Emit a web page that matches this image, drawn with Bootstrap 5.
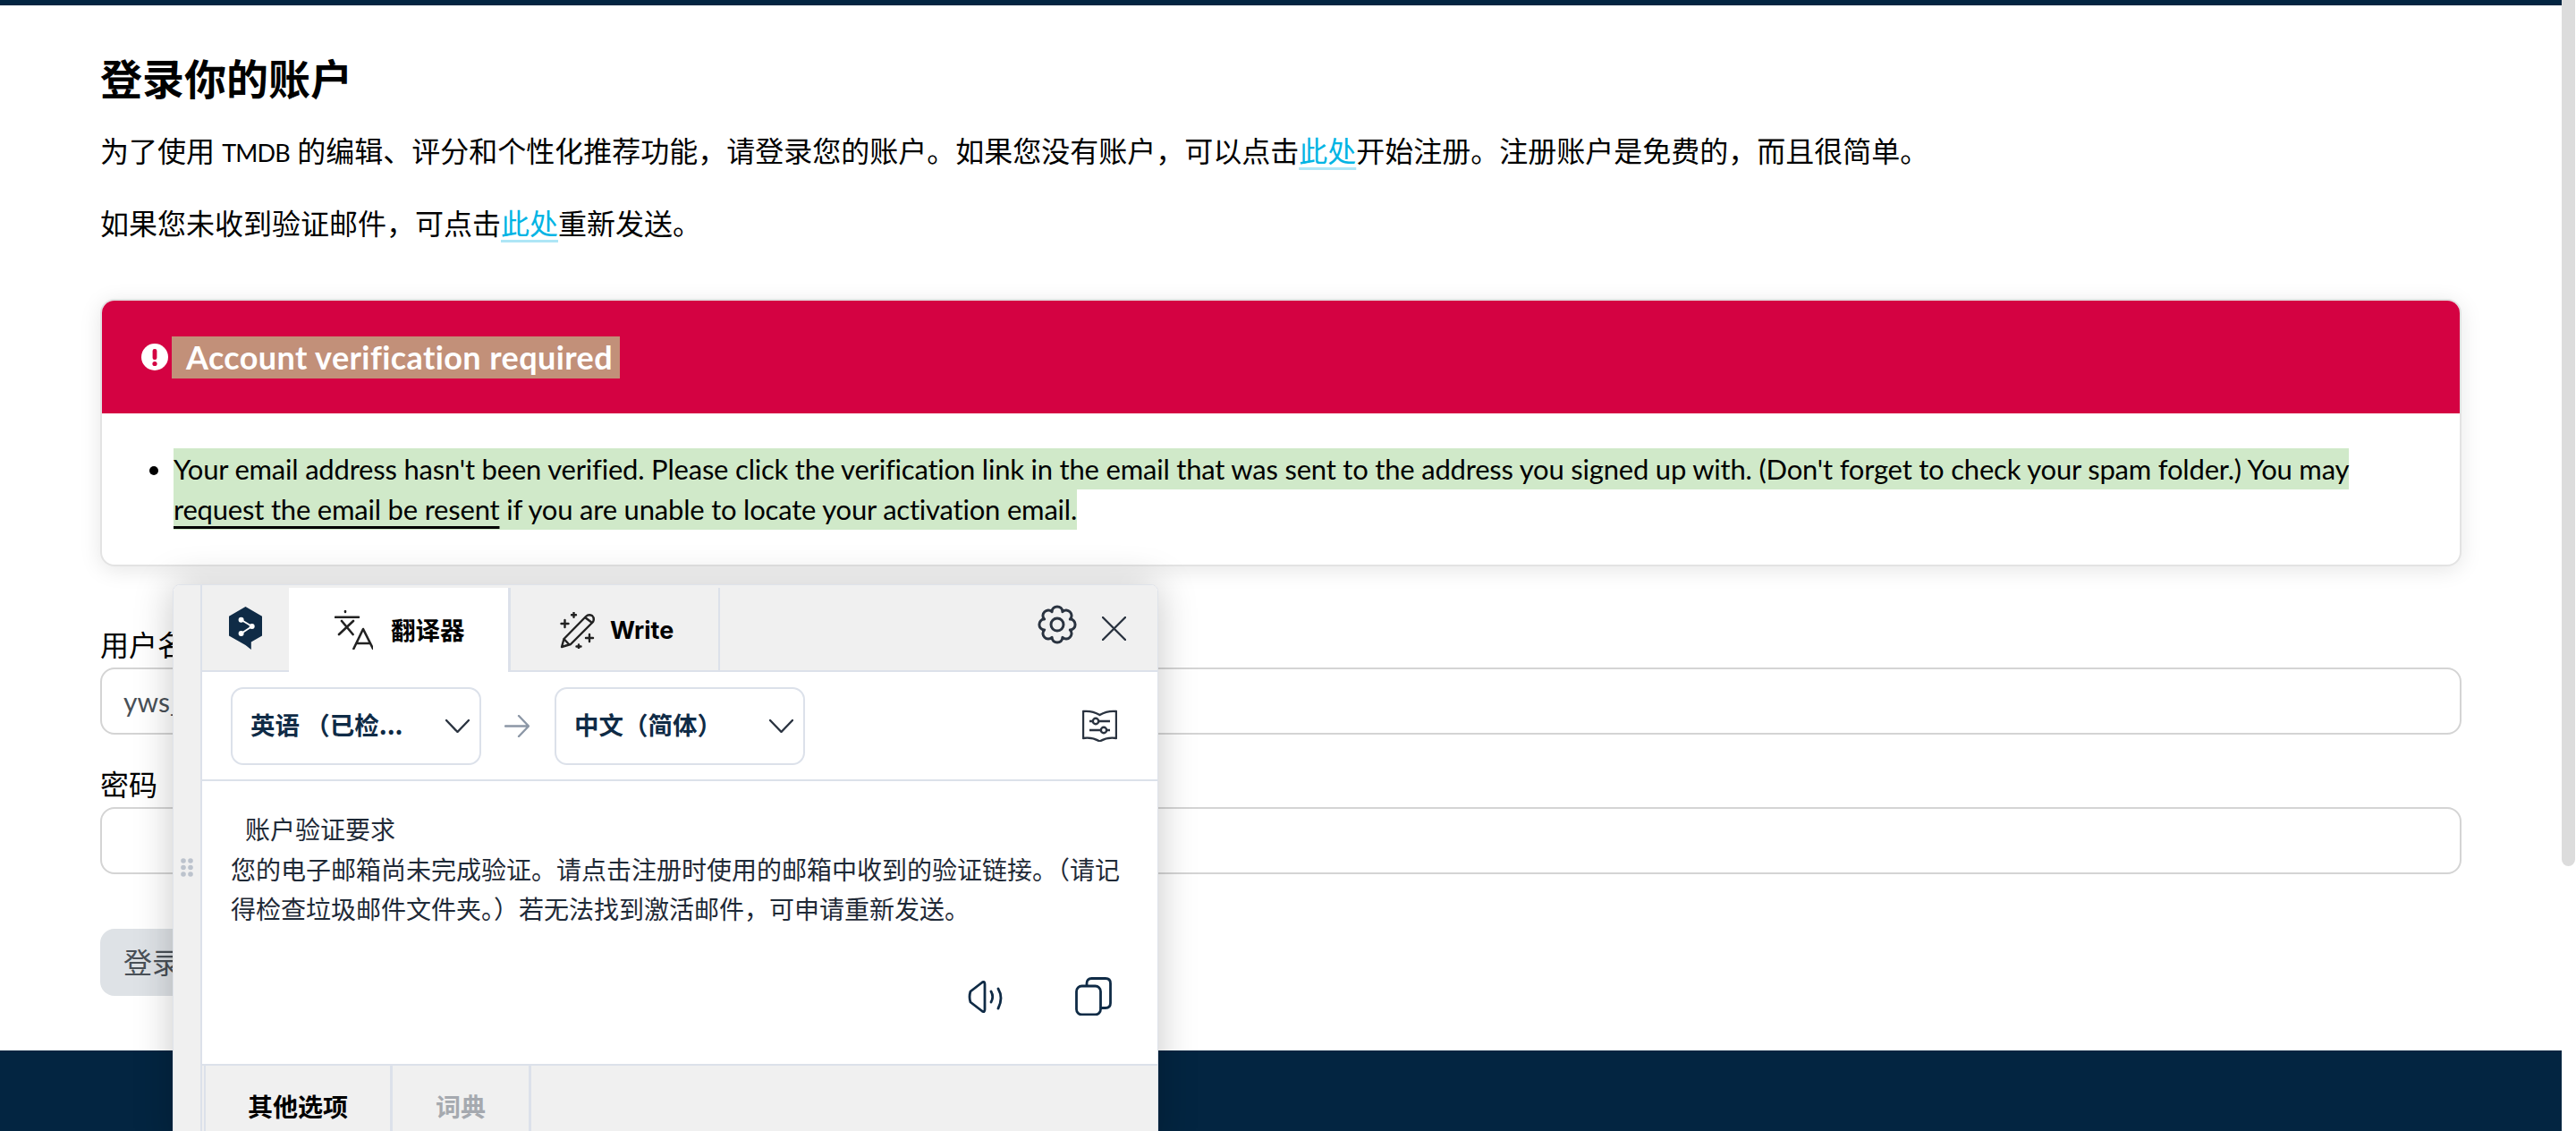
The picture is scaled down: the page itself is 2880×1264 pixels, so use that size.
<!DOCTYPE html>
<html lang="zh-CN">
<head>
<meta charset="utf-8">
<title>登录你的账户</title>
<link href="https://cdn.jsdelivr.net/npm/bootstrap@5.3.0/dist/css/bootstrap.min.css" rel="stylesheet">
<style>
html,body{height:100%;overflow:hidden;margin:0}
body{font-family:Lato,"Noto Sans CJK SC",sans-serif;font-size:32px;line-height:45px;color:#000;background:#fff}
.page-shell{height:1264px;position:relative}
.page-main{width:2864px;height:1264px;overflow:hidden}
.top-strip{height:6px;background:#032541}
.page-content{padding:54px 112px 61px}
.page-title{font-size:47px;line-height:56px;font-weight:700;margin:0 0 30px}
.intro{margin:0 0 36px;font-size:32px;line-height:45px}
.latin-narrow{font-size:27px;line-height:1;letter-spacing:-.8px}
.tmdb-link{color:#01b4e4;text-decoration:underline;text-decoration-color:#aee6f6;text-decoration-thickness:3px;text-underline-offset:6px}
.notice{margin-top:62px;border:2px solid #e3e3e3;border-radius:16px;box-shadow:0 4px 24px rgba(0,0,0,.1);overflow:hidden;--bs-card-bg:#fff}
.notice .card-header{height:126px;background:#d40242;border:0;border-radius:0;padding:0 44px;color:#fff}
.notice-head{font-size:36px;font-weight:700;line-height:47px;letter-spacing:.4px;background:#c29079;padding:0 8px 0 16px;margin-left:4px}
.notice .card-body{padding:40px 0 0 0;height:169px}
.notice ul{margin:0;padding:0 0 0 80px}
.notice li{font-size:31px;line-height:45px;letter-spacing:-.2px;white-space:nowrap}
.hl{background:#d0e9c9;padding:4px 0;box-decoration-break:clone;-webkit-box-decoration-break:clone}
.hl a{color:#000;text-decoration:underline;text-decoration-thickness:3px;text-underline-offset:7px}
.field-label{display:block;margin:0 0 3px;font-size:32px;line-height:45px}
.first-field{margin-top:65px}
.second-field{margin-top:33px}
.field-input.form-control{height:75px;border:2px solid #d4d4d4;border-radius:16px;font-size:30px;padding:0 24px;color:#495057;box-shadow:none}
.login-btn.btn{margin-top:61px;height:75px;width:260px;background:#dee2e6;border:0;border-radius:16px;color:#495057;font-size:32px;text-align:left;padding:0 26px}
.site-foot{height:90px;background:#032541}
.track{position:absolute;right:0;top:0;width:16px;height:1264px;background:#fff}
.thumb{width:15px;height:968px;background:#dcdcdc;border-radius:0 0 8px 8px}
/* translator panel */
.dl-panel{position:absolute;left:193px;top:653px;width:1102px;height:632px;background:#fff;border:1px solid #dfe3ea;border-radius:8px 8px 0 0;box-shadow:0 0 44px rgba(0,0,0,.22);font-family:"Noto Sans CJK SC",sans-serif;overflow:hidden;z-index:10}
.dl-rail{width:32px;background:#f0f0f0;border-right:2px solid #dce1ea;flex:none}
.dl-dots{width:14px;height:21px}
.dl-top{height:97px;background:#f0f0f0;border-bottom:2px solid #dce1ea;flex:none;position:relative}
.dl-logo{width:97px;height:95px}
.dl-tab{height:97px;font-size:27.5px;font-weight:700;line-height:1;color:#000}
.dl-tab.active-tab{width:248px;background:#fff;border-right:3px solid #dce1ea;margin-bottom:-2px;margin-top:3px;height:94px;padding-left:51px;gap:20px}
.dl-tab.write-tab{width:234px;height:94px;border-right:2px solid #dce1ea;margin-top:3px;padding-left:55px;gap:16px;font-size:27px;font-family:Inter,"Liberation Sans",sans-serif}
.dl-lang{height:122px;border-bottom:2px solid #dce1ea;padding:0 0 0 32px;flex:none}
.dl-select{width:280px;height:87px;border:2px solid #dce1ea;border-radius:14px;padding:0 11px 0 20px;font-size:27.5px;font-weight:700;color:#0f2b46;background:#fff;white-space:nowrap;text-spacing-trim:space-all}
.dl-select span{margin-top:-3px}
.dl-body{height:316px;padding:31px 22px 0 32px;font-size:28px;line-height:44.5px;color:#1f2a37;position:relative;flex:none}
.dl-actions{position:absolute;right:2px;top:219px}
.dl-foot{height:80px;background:#f0f0f0;border-top:2px solid #dce1ea;flex:none}
.dl-foot-tab{height:78px;font-size:28px;font-weight:700;color:#000;border-right:3px solid #dce1ea;padding-top:12px}
.dl-foot-tab.t1{width:211px;border-left:2px solid #dce1ea;margin-left:2px}
.dl-foot-tab.t2{width:155px;color:#a5a9af}
.ink{fill:none;stroke:#2a3340;stroke-linecap:round;stroke-linejoin:round}
.black-ink{fill:none;stroke:#222;stroke-linecap:round;stroke-linejoin:round}
.gap-arrow{margin:0 28px 0 26px}
.book-gap{margin-right:45px}
.gear-gap{margin-left:auto;margin-right:28px;margin-bottom:8px}
.close-gap{margin-right:35px;margin-top:2px}
.speaker-gap{margin-right:80px}
.copy-gap{margin-right:49px}
.title-indent{margin-left:16px}
</style>
</head>
<body>
<div class="page-shell">
  <div class="page-main">
    <div class="top-strip"></div>
    <main class="page-content">
      <h2 class="page-title">登录你的账户</h2>
      <p class="intro">为了使用 <span class="latin-narrow">TMDB</span> 的编辑、评分和个性化推荐功能，请登录您的账户。如果您没有账户，可以点击<a class="tmdb-link" href="#">此处</a>开始注册。注册账户是免费的，而且很简单。</p>
      <p class="intro">如果您未收到验证邮件，可点击<a class="tmdb-link" href="#">此处</a>重新发送。</p>
      <div class="card notice">
        <div class="card-header d-flex align-items-center">
          <svg width="30" height="30" viewBox="0 0 30 30"><circle cx="15" cy="15" r="15" fill="#fff"/><rect x="12.6" y="6" width="4.8" height="12" rx="2" fill="#d40242"/><circle cx="15" cy="22.5" r="2.6" fill="#d40242"/></svg>
          <span class="notice-head">Account verification required</span>
        </div>
        <div class="card-body">
          <ul>
            <li><span class="hl">Your email address hasn't been verified. Please click the verification link in the email that was sent to the address you signed up with. (Don't forget to check your spam folder.) You may<br><a href="#">request the email be resent</a> if you are unable to locate your activation email.</span></li>
          </ul>
        </div>
      </div>
      <form>
        <label class="field-label first-field" for="u">用户名</label>
        <input class="form-control field-input" id="u" value="yws_user">
        <label class="field-label second-field" for="p">密码</label>
        <input class="form-control field-input" id="p" type="password">
        <button type="button" class="btn login-btn d-block">登录</button>
      </form>
    </main>
    <footer class="site-foot"></footer>
  </div>
  <div class="track"><div class="thumb"></div></div>

  <aside class="dl-panel d-flex">
    <div class="dl-rail d-flex align-items-center justify-content-center">
      <svg class="dl-dots" viewBox="0 0 14 21" fill="#bcc3cd"><circle cx="3" cy="3" r="2.8"/><circle cx="11" cy="3" r="2.8"/><circle cx="3" cy="10.5" r="2.8"/><circle cx="11" cy="10.5" r="2.8"/><circle cx="3" cy="18" r="2.8"/><circle cx="11" cy="18" r="2.8"/></svg>
    </div>
    <div class="d-flex flex-column flex-grow-1">
      <div class="dl-top d-flex align-items-start">
        <div class="dl-logo d-flex align-items-center justify-content-center">
          <svg width="37" height="48" viewBox="0 0 37 48"><path d="M18.5 0 37 10.7V32.5L24.8 39.6V48L18.5 43 0 32.5V10.7Z" fill="#0f2b46"/><path d="M13.6 14.7 25.7 22 13.6 30" fill="none" stroke="#fff" stroke-width="1.8"/><circle cx="13.6" cy="14.7" r="3" fill="#fff"/><circle cx="25.7" cy="22" r="3" fill="#fff"/><circle cx="13.6" cy="30" r="3" fill="#fff"/></svg>
        </div>
        <div class="dl-tab active-tab d-flex align-items-center">
          <svg width="43" height="44" viewBox="0 0 43 44" class="black-ink" stroke-width="2.6"><path d="M12 1v1M1 7.700h26M8 12l12.600 15M21 12 5 27M21.400 43 32 21l11 22M24.500 37h15"/></svg>
          <span>翻译器</span>
        </div>
        <div class="dl-tab write-tab d-flex align-items-center">
          <svg width="40" height="41" viewBox="0 0 40 41" class="black-ink" stroke-width="2.4"><path d="M2 39 4.500 30 29 5Q32 2 36 4 39 7 37 11L12 36ZM28 6l8 6M4.500 30 10 36"/><path d="M5.500 9v8M1.500 13h8M15.500 0.800v5M13 3.300h5M33 25v8M29 29h8M21 36.500v4M18.500 38.500h5"/></svg>
          <span>Write</span>
        </div>
        <svg class="gear-gap align-self-center" width="44" height="44" viewBox="-22 -22 44 44" fill="none" stroke="#2a3340" stroke-width="3" stroke-linejoin="round"><path d="M14.300 5.900C19.800 11.300 11.300 19.800 5.900 14.300 6 22 -6 22 -5.900 14.300 -11.300 19.800 -19.800 11.300 -14.300 5.900 -22 6 -22 -6 -14.300 -5.900 -19.800 -11.300 -11.300 -19.800 -5.900 -14.300 -6 -22 6 -22 5.900 -14.300 11.300 -19.800 19.800 -11.300 14.300 -5.900 22 -6 22 6 14.300 5.900Z"/><circle r="7"/></svg>
        <svg class="close-gap align-self-center" width="27" height="27" viewBox="0 0 27 27" fill="none" stroke="#2a3340" stroke-width="2.400" stroke-linecap="round"><path d="M1 1 26 26M26 1 1 26"/></svg>
      </div>
      <div class="dl-lang d-flex align-items-center">
        <div class="dl-select d-flex align-items-center justify-content-between"><span>英语 （已检...</span><svg width="27" height="15" viewBox="0 0 27 15" class="ink" stroke-width="2.400"><path d="M1 1 13.500 14 26 1"/></svg></div>
        <svg class="gap-arrow" width="28" height="25" viewBox="0 0 28 25" fill="none" stroke="#8c97a6" stroke-width="2.400" stroke-linecap="round" stroke-linejoin="round"><path d="M1 12.500H27M16 1 27 12.500 16 24"/></svg>
        <div class="dl-select d-flex align-items-center justify-content-between"><span>中文（简体）</span><svg width="27" height="15" viewBox="0 0 27 15" class="ink" stroke-width="2.400"><path d="M1 1 13.500 14 26 1"/></svg></div>
        <svg class="ms-auto book-gap" width="39" height="36" viewBox="0 0 39 36" fill="none" stroke="#2a3340" stroke-width="2.400" stroke-linejoin="round"><path d="M1 2Q11 1 19.500 6 28 1 38 2V32Q28 30.500 19.500 35.500 11 30.500 1 32Z"/><path d="M8 13H31M8 23H31"/><circle cx="15" cy="13" r="3.200" fill="#fff"/><circle cx="24" cy="23" r="3.200" fill="#fff"/></svg>
      </div>
      <div class="dl-body">
        <div><span class="title-indent">账户验证要求</span></div>
        <div>您的电子邮箱尚未完成验证。请点击注册时使用的邮箱中收到的验证链接。（请记得检查垃圾邮件文件夹。）若无法找到激活邮件，可申请重新发送。</div>
        <div class="dl-actions d-flex align-items-center">
          <svg class="speaker-gap" width="40" height="36" viewBox="0 0 40 36" fill="none" stroke="#0f2b46" stroke-width="2.800" stroke-linecap="round" stroke-linejoin="round"><path d="M16 2 3 12Q1 18 3 24L16 34Q19 36 19 32V4Q19 0 16 2Z"/><path d="M26 12Q29.500 18 26 24M34 9Q40 19 34 31"/></svg>
          <svg class="copy-gap" width="41" height="43" viewBox="0 0 41 43" fill="none" stroke="#0f2b46" stroke-width="2.800" stroke-linecap="round" stroke-linejoin="round"><rect x="1.500" y="10" width="27" height="32" rx="6"/><path d="M13 9V7Q13 1.500 18.500 1.500H34Q39.500 1.500 39.500 7V29Q39.500 34.500 34 34.500H29"/></svg>
        </div>
      </div>
      <div class="dl-foot d-flex">
        <div class="dl-foot-tab t1 d-flex align-items-center justify-content-center">其他选项</div>
        <div class="dl-foot-tab t2 d-flex align-items-center justify-content-center">词典</div>
      </div>
    </div>
  </aside>
</div>
<script src="https://cdn.jsdelivr.net/npm/bootstrap@5.3.0/dist/js/bootstrap.bundle.min.js"></script>
</body>
</html>
